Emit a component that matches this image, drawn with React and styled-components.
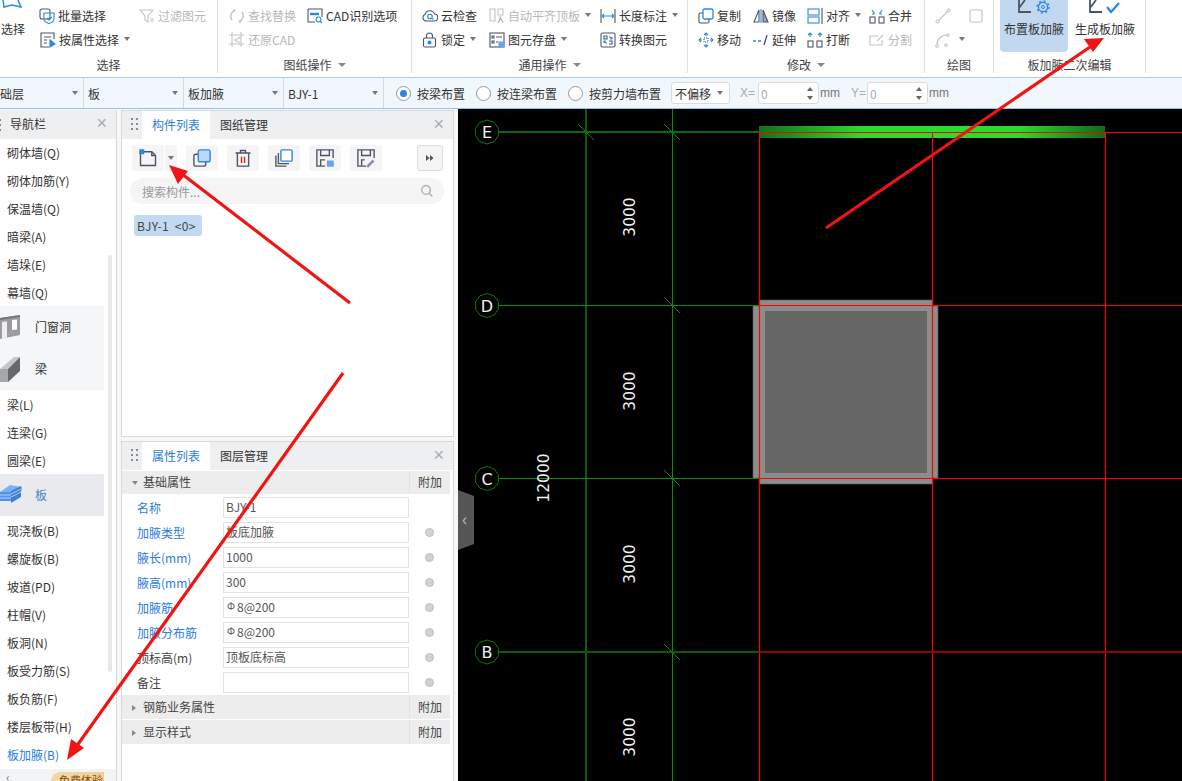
import React from 'react';
import styled, {createGlobalStyle} from 'styled-components';

const BLUE = '#2b86e6';
const INK = '#4c5566';
const OFF = '#c4c4c4';

const GlobalStyle = createGlobalStyle`
    html, body {
        margin: 0;
        padding: 0;
        background: #fff;
        overflow: hidden;
    }
    * {
        box-sizing: border-box;
    }
    body {
        font-family: "Noto Sans CJK SC", "Noto Sans", sans-serif;
        font-size: 12px;
        color: #333;
    }
`;

const Svg = ({children, size = 16, box = '0 0 16 16'}) => (
    <svg width={size} height={size} viewBox={box} fill="none" stroke={INK} strokeWidth="1.1">{children}</svg>
);

const icons = {
    batch: <Svg><rect x="1" y="1" width="10" height="10" rx="2" /><path d="M5 5h10v6q0 3-5 4.500q-5-1.500-5-4.500z" stroke={BLUE} /><path d="M8 10l2 2 3-3" stroke={BLUE} /></Svg>,
    attr: <Svg><path d="M14 7V1H1v14h8M4 5h7M4 8h3M4 11h3" /><path d="M10 8v7l5-3z" fill={BLUE} stroke={BLUE} /></Svg>,
    filter: <Svg><g stroke={OFF}><path d="M1 2h13l-5 6v6l-3-2V8z" /><path d="M11 11h4M11 13h4" /></g></Svg>,
    find: <Svg><g stroke={OFF} strokeWidth="1.4"><path d="M3 12A6 6 0 0 1 6 2.500" /><path d="M13 4a6 6 0 0 1-3 9.500" /><path d="M5 1v3M11 12v3" /></g></Svg>,
    restore: <Svg><g stroke={OFF}><path d="M3 0v15M0 3h15M12 0v15M0 12h15" /><path d="M11 5L6 8l5 3" /></g></Svg>,
    cad: <Svg><path d="M1 1h14v8M1 1v13h7" /><circle cx="11.500" cy="11.500" r="2.500" stroke={BLUE} /><path d="M13 13l2 2" stroke={BLUE} /><path d="M3 6h9" stroke={BLUE} strokeWidth="2.400" /></Svg>,
    cloud: <Svg><path d="M4 13h8a3.500 3.500 0 0 0 .5-7A5 5 0 0 0 3 6.500 3.400 3.400 0 0 0 4 13z" /><circle cx="8" cy="8.500" r="2.300" stroke={BLUE} /><path d="M10 10.500l1.500 1" stroke={BLUE} /></Svg>,
    lock: <Svg><rect x="1.500" y="6" width="12" height="9" rx="1.500" /><path d="M4.500 6V4a3 3 0 0 1 6 0v2" /><circle cx="7.500" cy="10.500" r="1.500" fill={BLUE} stroke={BLUE} /></Svg>,
    align: <Svg><g stroke={OFF}><path d="M1 1h5v12H1zM9 1h5v6H9zM11 8v2" /><path d="M9 15l2.500-5 2.500 5" stroke="#aaa" /></g></Svg>,
    store: <Svg><rect x="1" y="1" width="14" height="14" /><path d="M3 4h2v2H3zM7 5h6M3 9h2v2H3zM7 10h2" /><rect x="10" y="10" width="5" height="5" fill="#6da4e6" stroke="#6da4e6" /></Svg>,
    dim: <Svg><path d="M1 1v14M15 1v14" /><path d="M2 8h12M4 6L2 8l2 2M12 6l2 2-2 2" stroke={BLUE} /></Svg>,
    convert: <Svg><rect x="1" y="1" width="14" height="14" rx="1.500" /><path d="M4 4h3v3H4zM9 12h3V9H9" /><path d="M9 5a3 3 0 0 1 3 2M12 5v2h-2M7 11a3 3 0 0 1-3-2M4 11V9h2" stroke={BLUE} /></Svg>,
    copy: <Svg><rect x="1" y="5" width="10" height="10" rx="1.500" /><rect x="5" y="1" width="10" height="10" rx="1.500" fill="#fff" stroke={BLUE} strokeWidth="1.300" /></Svg>,
    mirror: <Svg><path d="M6 2L1 14h5z" /><path d="M10 2l5 12h-5z" fill="#9ea6b3" /><path d="M8 1v14" stroke={BLUE} /></Svg>,
    alignH: <Svg><rect x="1" y="1" width="11" height="6" stroke={BLUE} /><rect x="1" y="9" width="11" height="6" stroke={BLUE} /><path d="M15 0v16" /></Svg>,
    merge: <Svg><rect x="1" y="9" width="5" height="6" /><rect x="10" y="9" width="5" height="6" /><g stroke={BLUE}><path d="M3 2l2 3M3 6h2V4M13 2l-2 3M13 6h-2V4" /></g></Svg>,
    move: <Svg><g stroke={BLUE}><path d="M8 1v3M8 12v3M1 8h3M12 8h3" /><path d="M6 3l2-2 2 2M6 13l2 2 2-2M3 6L1 8l2 2M13 6l2 2-2 2" /></g><path d="M6 6h4v4H6z" strokeDasharray="1 1" /></Svg>,
    extend: <Svg><path d="M0 9h3M5 9h3" stroke={BLUE} strokeWidth="1.300" /><path d="M14 3l-3 10" strokeWidth="1.300" /></Svg>,
    split: <Svg><rect x="1" y="9" width="5" height="6" /><rect x="10" y="9" width="5" height="6" /><g stroke={BLUE}><path d="M3 1v4M1 3l2-2 2 2M13 1v4M11 3l2-2 2 2" /></g></Svg>,
    cut: <Svg><g stroke={OFF}><path d="M9 4H1v9h12V8" /><path d="M8 9l6-6" /></g></Svg>,
    line: <Svg><g stroke={OFF}><path d="M3 13L13 3" /><circle cx="2.500" cy="13.500" r="1.500" /><circle cx="13.500" cy="2.500" r="1.500" /></g></Svg>,
    rect: <Svg><rect x="2" y="2" width="12" height="12" rx="1.500" stroke={OFF} /></Svg>,
    arc: <Svg><g stroke={OFF}><path d="M2 13C2 7 6 3 12 3" /><circle cx="2" cy="14" r="1.300" /><circle cx="13" cy="3" r="1.300" /><circle cx="11" cy="13" r="1.300" /></g></Svg>,
};

const Tool = ({icon, label, off, caret, nudge}) => (
    <ToolRow off={off} nudge={nudge}>
        <IconSlot>{icons[icon]}</IconSlot>
        <span>{label}</span>
        {caret && <Caret />}
    </ToolRow>
);

const Group = ({title, width, pad, caret, children}) => (
    <GroupBox width={width}>
        <GroupBody pad={pad}>{children}</GroupBody>
        <GroupTitle>{title}{caret && <TitleCaret />}</GroupTitle>
    </GroupBox>
);

const LayerIcon = () => (
    <svg width="22" height="24" viewBox="0 0 22 24">
        <path d="M0 9L10 2l12 2v3L10 16 0 14z" fill="#7db2f0" />
        <path d="M0 9h11v9H0z" fill="#4f92e8" />
        <path d="M11 8l10-5v11l-10 6z" fill="#3f7fd8" />
        <path d="M0 12h11M0 15h11M11 11l10-5M11 14l10-5" stroke="#cfe2fa" strokeWidth=".8" />
    </svg>
);

const WallIcon = () => (
    <svg width="21" height="26" viewBox="0 0 21 26">
        <path d="M0 4l20-3v20L0 25z" fill="#9a9c9f" />
        <path d="M0 4l20-3v2L0 6z" fill="#75777a" />
        <path d="M12 6l5-.5v10l-5 .5z" fill="#fff" />
        <path d="M2 8l5-.8V25H2z" fill="#eee" />
    </svg>
);

const BeamIcon = () => (
    <svg width="21" height="26" viewBox="0 0 21 26">
        <path d="M0 13L14 1h6L8 13z" fill="#c4c6c9" />
        <path d="M8 13L20 1v14L8 26z" fill="#66686c" />
        <path d="M0 13h8v13H0z" fill="#a5a7aa" />
    </svg>
);

const Nav = () => {
    const first = ['砌体墙(Q)', '砌体加筋(Y)', '保温墙(Q)', '暗梁(A)', '墙垛(E)', '幕墙(Q)'];
    const second = ['梁(L)', '连梁(G)', '圆梁(E)'];
    const third = ['现浇板(B)', '螺旋板(B)', '坡道(PD)', '柱帽(V)', '板洞(N)', '板受力筋(S)', '板负筋(F)', '楼层板带(H)'];
    return (
        <NavPane>
            <NavHead>
                <NavGrip />
                导航栏
                <Close>×</Close>
            </NavHead>
            {first.map(t => <NavItem key={t}>{t}</NavItem>)}
            <NavBlock>
                <NavCat><CatIcon><WallIcon /></CatIcon><span>门窗洞</span></NavCat>
                <NavCat><CatIcon><BeamIcon /></CatIcon><span>梁</span></NavCat>
            </NavBlock>
            {second.map(t => <NavItem key={t}>{t}</NavItem>)}
            <NavBlock active>
                <NavCat active><CatIcon><LayerIcon /></CatIcon><span>板</span></NavCat>
            </NavBlock>
            {third.map(t => <NavItem key={t}>{t}</NavItem>)}
            <NavItem active>板加腋(B)</NavItem>
            <NavFoot>
                <span>‹</span>
                <Badge>免费体验</Badge>
            </NavFoot>
            <NavScroll />
        </NavPane>
    );
};

const PanelHeader = ({active, other}) => (
    <PanelHead>
        <Grip><i /><i /><i /><i /><i /><i /></Grip>
        <Tab active>{active}</Tab>
        <Tab>{other}</Tab>
        <Close>×</Close>
    </PanelHead>
);

const ListPanel = () => (
    <Panel height={327}>
        <PanelHeader active="构件列表" other="图纸管理" />
        <Toolbar>
            <SplitButton>
                <SplitMain>
                    <Svg size={20}><path d="M2 3h9l3 3v8H2z" /><rect x="1" y="1" width="4" height="4" fill={BLUE} stroke="none" /><path d="M11 3v3h3" /></Svg>
                </SplitMain>
                <SplitSide><Caret /></SplitSide>
            </SplitButton>
            <ToolButton>
                <Svg size={20}><rect x="1.500" y="5" width="9.500" height="9.500" rx="1.500" /><rect x="5" y="1.500" width="9.500" height="9.500" rx="1.500" fill="#bcd6f5" stroke={BLUE} /></Svg>
            </ToolButton>
            <ToolButton>
                <Svg size={20}><path d="M2 4h12M6 4V2h4v2M3.500 4v10.500h9V4" /><path d="M6.800 7v5M9.200 7v5" stroke="#d22" /></Svg>
            </ToolButton>
            <ToolButton>
                <Svg size={20}><path d="M1.500 6v8.500H10M3.500 4v8.500H12" /><rect x="5.500" y="1.500" width="9" height="9" rx="1" fill="#fff" stroke={BLUE} /></Svg>
            </ToolButton>
            <ToolButton>
                <Svg size={20}><path d="M8 14.500H1.500v-13h13V8M4.500 2v4h7V2M4.500 14V9.500H8" /><rect x="9.500" y="10" width="5.500" height="5" fill="#6da4e6" stroke="none" /></Svg>
            </ToolButton>
            <ToolButton>
                <Svg size={20}><path d="M8 14.500H1.500v-13h13V8M4.500 2v4h7V2M4.500 14V9.500H7" /><path d="M9 15l5-5" stroke="#8a93a3" strokeWidth="2" /></Svg>
            </ToolButton>
            <MoreButton>
                <svg width="8" height="6" viewBox="0 0 8 6" fill="#555"><path d="M0 0l3.500 3L0 6zM4 0l3.500 3L4 6z" /></svg>
            </MoreButton>
        </Toolbar>
        <SearchBox>
            搜索构件...
            <svg width="14" height="14" viewBox="0 0 14 14" fill="none" stroke="#a9a9a9" strokeWidth="1.300"><circle cx="6" cy="6" r="4.300" /><path d="M9.300 9.300l3 3" /></svg>
        </SearchBox>
        <Tag>BJY-1  &lt;0&gt;</Tag>
    </Panel>
);

const fields = [
    {label: '名称', value: 'BJY-1', blue: true, noDot: true},
    {label: '加腋类型', value: '板底加腋', blue: true},
    {label: '腋长(mm)', value: '1000', blue: true},
    {label: '腋高(mm)', value: '300', blue: true},
    {label: '加腋筋', value: '8@200', blue: true, rebar: true},
    {label: '加腋分布筋', value: '8@200', blue: true, rebar: true},
    {label: '顶标高(m)', value: '顶板底标高'},
    {label: '备注', value: ''},
];

const PropsPanel = () => (
    <Panel height={340} grow>
        <PanelHeader active="属性列表" other="图层管理" />
        <Section first><SectionName><SecArrow open />基础属性</SectionName><SectionExtra>附加</SectionExtra></Section>
        <Fields>
            {fields.map(f => (
                <FieldRow key={f.label}>
                    <FieldLabel blue={f.blue}>{f.label}</FieldLabel>
                    <FieldValue>{f.rebar && <Rebar>Φ</Rebar>}{f.value}</FieldValue>
                    {!f.noDot && <Dot />}
                </FieldRow>
            ))}
        </Fields>
        <Section><SectionName><SecArrow />钢筋业务属性</SectionName><SectionExtra>附加</SectionExtra></Section>
        <Section><SectionName><SecArrow />显示样式</SectionName><SectionExtra>附加</SectionExtra></Section>
    </Panel>
);

const ring = (cx, cy) => {
    const pts = [];
    for (let i = 0; i < 10; i++) {
        const a = (Math.PI * 2 * i) / 10 + Math.PI / 10;
        pts.push(`${(cx + 12 * Math.cos(a)).toFixed(1)},${(cy + 12 * Math.sin(a)).toFixed(1)}`);
    }
    return pts.join(' ');
};

const axes = [['E', 132], ['D', 305.5], ['C', 478.5], ['B', 652]];
const dims = [217, 391, 564, 737];

const Drawing = () => (
    <svg width="724" height="672" viewBox="458 109 724 672" style={{display: 'block'}}>
        <defs>
            <linearGradient id="beam" x1="0" x2="1" y1="0" y2="0">
                <stop offset="0" stopColor="#14701a" />
                <stop offset=".3" stopColor="#2cdc2c" />
                <stop offset=".75" stopColor="#2cdc2c" />
                <stop offset="1" stopColor="#126a18" />
            </linearGradient>
        </defs>
        <rect x="759" y="126" width="346" height="12" fill="url(#beam)" />

        <path d="M753 306h6v-6h174v6h5v172h-5v6H759v-6h-6z" fill="#8c8c8c" stroke="#5a5a5a" strokeWidth=".6" />
        <rect x="765" y="311" width="162" height="162" fill="#666" />

        <path d="M586 109v672" stroke="#0a5c0a" strokeWidth="2" />
        <path d="M672.500 109v672" stroke="#0d8a0d" />
        <path d="M499 132h260" stroke="#0a6a0a" strokeWidth="2" />
        <path d="M499 305.500h260M499 478.500h260" stroke="#0d8a0d" />
        <path d="M499 652h260" stroke="#0a5c0a" strokeWidth="2" />
        <path d="M578 124l16 16M664 124l16 16M664 297l16 16M664 470l16 16M664 644l16 16" stroke="#0d8a0d" />

        <path d="M759.500 132v649M932.500 132v649M1105.500 132v649" stroke="#f00" strokeWidth="1.200" />
        <path d="M759 132.500h423M759 305.500h423M759 478.500h423" stroke="#f00" strokeWidth="1.200" />
        <path d="M759 652h423" stroke="#900606" strokeWidth="2" />

        {axes.map(([name, y]) => (
            <g key={name}>
                <polygon points={ring(487, y)} fill="#000" stroke="#0a7a0a" />
                <CadText x="487" y={y + 6} textAnchor="middle" fontSize="16">{name}</CadText>
            </g>
        ))}
        {dims.map(y => (
            <CadText key={y} textAnchor="middle" fontSize="15.500" transform={`translate(635 ${y}) rotate(-90)`}>3000</CadText>
        ))}
        <CadText textAnchor="middle" fontSize="15.500" transform="translate(549 478) rotate(-90)">12000</CadText>
    </svg>
);

const Marks = () => (
    <Overlay width="1182" height="781" viewBox="0 0 1182 781">
        <g stroke="#f01414" strokeWidth="3.200" fill="#f01414">
            <path d="M826 228L1090 47" />
            <path d="M350 303L182 174" />
            <path d="M343 373L76 747" />
        </g>
        <g fill="#f01414">
            <path d="M1104 38l-20 1 9 13z" />
            <path d="M169 165l9 19 10-13z" />
            <path d="M67 760l17-12-13-9z" />
        </g>
    </Overlay>
);

export default function App() {
    return (
        <Page>
            <GlobalStyle />
            <Ribbon>
                <Group title="选择" width={218} pad={0}>
                    <BigSelect>
                        <svg width="22" height="8" viewBox="0 0 22 8" fill="none" stroke={BLUE} strokeWidth="1.500"><path d="M2 0l1 7 8-2 9 2-3-7" /></svg>
                        <span>选择</span>
                    </BigSelect>
                    <Col width={100}>
                        <Tool icon="batch" label="批量选择" />
                        <Tool icon="attr" label="按属性选择" caret nudge />
                    </Col>
                    <Col width={78}>
                        <Tool icon="filter" label="过滤图元" off />
                    </Col>
                </Group>
                <Group title="图纸操作" width={194} pad={11} caret>
                    <Col width={78}>
                        <Tool icon="find" label="查找替换" off />
                        <Tool icon="restore" label="还原CAD" off />
                    </Col>
                    <Col width={94}>
                        <Tool icon="cad" label="CAD识别选项" />
                    </Col>
                </Group>
                <Group title="通用操作" width={276} pad={10} caret>
                    <Col width={67}>
                        <Tool icon="cloud" label="云检查" />
                        <Tool icon="lock" label="锁定" caret />
                    </Col>
                    <Col width={111}>
                        <Tool icon="align" label="自动平齐顶板" off caret />
                        <Tool icon="store" label="图元存盘" caret />
                    </Col>
                    <Col width={80}>
                        <Tool icon="dim" label="长度标注" caret />
                        <Tool icon="convert" label="转换图元" />
                    </Col>
                </Group>
                <Group title="修改" width={237} pad={10} caret>
                    <Col width={55}>
                        <Tool icon="copy" label="复制" />
                        <Tool icon="move" label="移动" />
                    </Col>
                    <Col width={54}>
                        <Tool icon="mirror" label="镜像" />
                        <Tool icon="extend" label="延伸" />
                    </Col>
                    <Col width={62}>
                        <Tool icon="alignH" label="对齐" caret />
                        <Tool icon="split" label="打断" />
                    </Col>
                    <Col width={50}>
                        <Tool icon="merge" label="合并" />
                        <Tool icon="cut" label="分割" off />
                    </Col>
                </Group>
                <Group title="绘图" width={69} pad={10}>
                    <Col width={33}>
                        <Tool icon="line" label="" />
                        <Tool icon="arc" label="" caret />
                    </Col>
                    <Col width={16}>
                        <Tool icon="rect" label="" />
                    </Col>
                </Group>
                <Group title="板加腋二次编辑" width={152} pad={6}>
                    <BigButton active>
                        <BigIcon>
                            <svg width="34" height="14" viewBox="0 0 34 14" fill="none" stroke={INK} strokeWidth="1.800"><path d="M2 0v12h12M2 8l6-8" /><circle cx="26" cy="7" r="4.600" stroke={BLUE} strokeWidth="1.300" /><circle cx="26" cy="7" r="6" stroke={BLUE} strokeWidth="1.400" strokeDasharray="2 2.700" /><circle cx="26" cy="7" r="1.500" stroke={BLUE} strokeWidth="1" /></svg>
                        </BigIcon>
                        布置板加腋
                    </BigButton>
                    <BigButton>
                        <BigIcon>
                            <svg width="34" height="14" viewBox="0 0 34 14" fill="none" stroke={INK} strokeWidth="1.800"><path d="M2 0v12h12M2 8l6-8" /><path d="M19 7l4 5 8-9" stroke={BLUE} strokeWidth="2.200" /></svg>
                        </BigIcon>
                        生成板加腋
                    </BigButton>
                </Group>
            </Ribbon>
            <OptionBar>
                <SelectCell width={84} flush>础层<Caret /></SelectCell>
                <SelectCell width={100}>板<Caret /></SelectCell>
                <SelectCell width={100}>板加腋<Caret /></SelectCell>
                <SelectCell width={100}>BJY-1<Caret /></SelectCell>
                <Options>
                    <Radio checked />
                    <OptionText>按梁布置</OptionText>
                    <Radio />
                    <OptionText>按连梁布置</OptionText>
                    <Radio />
                    <OptionText>按剪力墙布置</OptionText>
                    <OffsetSelect>不偏移<Caret /></OffsetSelect>
                    <Coord>X=</Coord>
                    <CoordInput>0<Spin><i /><b /></Spin></CoordInput>
                    <Unit>mm</Unit>
                    <Coord second>Y=</Coord>
                    <CoordInput>0<Spin><i /><b /></Spin></CoordInput>
                    <Unit>mm</Unit>
                </Options>
            </OptionBar>
            <Body>
                <Nav />
                <Middle>
                    <ListPanel />
                    <PropsPanel />
                </Middle>
                <Canvas>
                    <Drawing />
                    <CollapseTab>‹</CollapseTab>
                </Canvas>
            </Body>
            <Marks />
        </Page>
    );
}

const Page = styled.div`
    position: relative;
    width: 1182px;
    height: 781px;
    overflow: hidden;
`;

const Ribbon = styled.div`
    display: flex;
    height: 77px;
    background: #fff;
`;

const GroupBox = styled.div`
    width: ${props => props.width}px;
    height: 73px;
    display: flex;
    flex-direction: column;
    border-right: 1px solid #e0e0e0;
    flex: none;
`;

const GroupBody = styled.div`
    display: flex;
    height: 57px;
    padding-left: ${props => props.pad}px;
    padding-top: 3px;
`;

const GroupTitle = styled.div`
    display: flex;
    justify-content: center;
    align-items: center;
    gap: 6px;
    height: 16px;
    line-height: 16px;
    color: #444;
`;

const TitleCaret = styled.i`
    border: 4px solid transparent;
    border-top: 4px solid #888;
    border-bottom: 0;
`;

const Col = styled.div`
    width: ${props => props.width}px;
    flex: none;
`;

const ToolRow = styled.div`
    display: flex;
    align-items: center;
    height: 24px;
    white-space: nowrap;
    padding-left: ${props => (props.nudge ? 1 : 0)}px;
    color: ${props => (props.off ? '#b8b8b8' : '#333')};
`;

const IconSlot = styled.span`
    display: flex;
    width: 16px;
    height: 16px;
    margin: 1px 3px 0 0;
    flex: none;
`;

const Caret = styled.i`
    display: inline-block;
    margin-left: auto;
    border: 3px solid transparent;
    border-top: 4px solid #777;
    border-bottom: 0;
    ${ToolRow} & {
        margin-left: 5px;
    }
`;

const BigSelect = styled.div`
    width: 39px;
    flex: none;
    margin-top: -3px;
    padding-left: 1px;
    display: flex;
    flex-direction: column;
    gap: 13px;
    line-height: 16px;
    svg {
        display: block;
    }
`;

const BigButton = styled.div`
    width: ${props => (props.active ? 68 : 62)}px;
    height: 52px;
    margin: -3px 6px 0 0;
    flex: none;
    display: flex;
    flex-direction: column;
    align-items: center;
    color: #333;
    line-height: 16px;
    white-space: nowrap;
    border-radius: 0 0 4px 4px;
    background: ${props => (props.active ? '#c2d8f0' : 'transparent')};
`;

const BigIcon = styled.div`
    height: 14px;
    margin-bottom: 7px;
    svg {
        display: block;
    }
`;

const OptionBar = styled.div`
    display: flex;
    height: 32px;
    background: #f0f8fd;
    border-top: 1px solid #a9cdf0;
    border-bottom: 1px solid #90c2f2;
`;

const SelectCell = styled.div`
    width: ${props => props.width}px;
    flex: none;
    display: flex;
    align-items: center;
    padding: 0 4px 0 ${props => (props.flush ? 0 : 4)}px;
    border-right: 1px solid #cfdce8;
    ${Caret} {
        margin-right: 1px;
    }
`;

const Options = styled.div`
    display: flex;
    align-items: center;
    padding-left: 12px;
`;

const Radio = styled.span`
    position: relative;
    width: 15px;
    height: 15px;
    border-radius: 50%;
    border: 1px solid #999;
    background: #fff;
    flex: none;
    &::after {
        content: '';
        display: ${props => (props.checked ? 'block' : 'none')};
        position: absolute;
        left: 3px;
        top: 3px;
        width: 7px;
        height: 7px;
        border-radius: 50%;
        background: ${BLUE};
    }
`;

const OptionText = styled.span`
    margin: 0 11px 0 6px;
    white-space: nowrap;
`;

const OffsetSelect = styled.div`
    width: 59px;
    height: 22px;
    margin-left: -1px;
    display: flex;
    align-items: center;
    padding: 0 6px 0 3px;
    background: #fff;
    border: 1px solid #dcdcdc;
    border-radius: 3px;
    flex: none;
`;

const Coord = styled.span`
    color: #aaa;
    margin-left: 10px;
    width: ${props => (props.second ? 16 : 18)}px;
    flex: none;
    font-family: "Liberation Sans", sans-serif;
`;

const CoordInput = styled.div`
    width: 61px;
    height: 22px;
    display: flex;
    align-items: center;
    justify-content: space-between;
    padding: 0 5px 0 2px;
    color: #aaa;
    background: #fff;
    border: 1px solid #dcdcdc;
    border-radius: 3px;
    flex: none;
`;

const Spin = styled.span`
    display: flex;
    flex-direction: column;
    gap: 5px;
    i {
        border: 3px solid transparent;
        border-bottom: 4px solid #666;
        border-top: 0;
    }
    b {
        border: 3px solid transparent;
        border-top: 4px solid #666;
        border-bottom: 0;
    }
`;

const Unit = styled.span`
    margin-left: 1px;
    width: 21px;
    color: #777;
    flex: none;
    font-family: "Liberation Sans", sans-serif;
`;

const Body = styled.div`
    display: flex;
    height: 672px;
    background: #f7f7f7;
`;

const NavPane = styled.div`
    position: relative;
    width: 117px;
    margin-top: 1px;
    background: #fff;
    border-right: 1px solid #d9d9d9;
    overflow: hidden;
    flex: none;
`;

const NavHead = styled.div`
    position: relative;
    height: 29px;
    padding-left: 10px;
    line-height: 27px;
    background: #eeeff1;
`;

const NavGrip = styled.i`
    position: absolute;
    left: -1px;
    top: 9px;
    width: 2px;
    height: 12px;
    background: repeating-linear-gradient(#888 0 2px, transparent 2px 5px);
`;

const Close = styled.span`
    position: absolute;
    right: 9px;
    top: 0;
    font-size: 18px;
    line-height: 27px;
    color: #aaa;
    font-family: "Liberation Sans", sans-serif;
    font-weight: normal;
`;

const NavItem = styled.div`
    height: 28px;
    line-height: 27px;
    padding-left: 7px;
    color: ${props => (props.active ? '#2b7ce0' : '#333')};
    white-space: nowrap;
`;

const NavBlock = styled.div`
    width: 104px;
    margin: -1px 0 1px;
    background: ${props => (props.active ? '#e9eaee' : '#f5f6f8')};
`;

const NavCat = styled.div`
    display: flex;
    align-items: center;
    height: 42px;
    color: ${props => (props.active ? '#4a7fd4' : '#333')};
    span:last-child {
        margin-top: -2px;
    }
`;

const CatIcon = styled.span`
    display: flex;
    width: 35px;
    flex: none;
    margin: 0;
`;

const NavFoot = styled.div`
    display: flex;
    justify-content: space-between;
    height: 12px;
    padding: 2px 12px 0 6px;
    background: #f2f3f5;
    color: #777;
    line-height: 12px;
`;

const Badge = styled.span`
    width: 53px;
    height: 20px;
    margin-top: 1px;
    padding-left: 8px;
    font-size: 11px;
    line-height: 16px;
    color: #7a4d14;
    background: linear-gradient(90deg, #f3d9a6, #efcf92);
    border-radius: 9px 0 0 0;
`;

const NavScroll = styled.i`
    position: absolute;
    left: 108px;
    top: 145px;
    width: 4px;
    height: 417px;
    border-radius: 2px;
    background: #e8e8e8;
`;

const Middle = styled.div`
    width: 337px;
    margin-left: 4px;
    padding-top: 1px;
    display: flex;
    flex-direction: column;
    gap: 4px;
    flex: none;
`;

const Panel = styled.div`
    width: 333px;
    height: ${props => props.height}px;
    background: #fff;
    border: 1px solid #d9d9d9;
    ${props => props.grow && 'border-bottom: 0;'}
    flex: none;
`;

const PanelHead = styled.div`
    position: relative;
    display: flex;
    height: 28px;
    background: #eeeff1;
`;

const Grip = styled.span`
    display: grid;
    grid-template-columns: 2px 2px;
    grid-template-rows: repeat(3, 2px);
    gap: 3px;
    padding: 7px 0 0 9px;
    width: 20px;
    flex: none;
    i {
        background: #8c8c8c;
    }
`;

const Tab = styled.div`
    width: 68px;
    text-align: center;
    line-height: 27px;
    background: ${props => (props.active ? '#fff' : 'transparent')};
    color: ${props => (props.active ? '#2b7ce0' : '#333')};
`;

const Toolbar = styled.div`
    display: flex;
    gap: 9px;
    height: 26px;
    margin: 6px 10px 0;
`;

const ToolButton = styled.div`
    width: 32px;
    height: 26px;
    display: flex;
    align-items: center;
    justify-content: center;
    border-radius: 3px;
    background: #f5f5f6;
    flex: none;
`;

const SplitButton = styled.div`
    display: flex;
    width: 45px;
    height: 26px;
    background: #f5f5f6;
    border-radius: 3px;
    flex: none;
`;

const SplitMain = styled.div`
    width: 33px;
    display: flex;
    align-items: center;
    justify-content: center;
    border-right: 1px solid #fff;
`;

const SplitSide = styled.div`
    flex: 1;
    display: flex;
    align-items: center;
    justify-content: center;
    ${Caret} {
        margin: 0;
    }
`;

const MoreButton = styled(ToolButton)`
    width: 26px;
    margin-left: auto;
    border: 1px solid #dedede;
`;

const SearchBox = styled.div`
    display: flex;
    align-items: center;
    justify-content: space-between;
    height: 26px;
    margin: 7px 9px 0 8px;
    padding: 0 10px 0 12px;
    border-radius: 13px;
    background: #f5f5f5;
    color: #999;
`;

const Tag = styled.div`
    width: 68px;
    height: 21px;
    margin: 11px 0 0 12px;
    padding-left: 3px;
    line-height: 21px;
    white-space: pre;
    letter-spacing: .3px;
    color: #444;
    background: #c2d9f2;
    border-radius: 3px;
`;

const Section = styled.div`
    display: flex;
    width: 328px;
    height: ${props => (props.first ? 23 : 24)}px;
    margin-top: 1px;
    line-height: ${props => (props.first ? 21 : 23)}px;
    background: #ededed;
    color: #444;
`;

const SectionName = styled.div`
    position: relative;
    width: 288px;
    padding-left: 21px;
    border-right: 1px solid #e2e2e2;
    flex: none;
`;

const SecArrow = styled.i`
    position: absolute;
    left: 10px;
    top: 10px;
    ${props => (props.open
        ? 'border: 3px solid transparent; border-top: 4px solid #888; border-bottom: 0;'
        : 'border: 3px solid transparent; border-left: 4px solid #888; border-right: 0;')}
`;

const SectionExtra = styled.div`
    flex: 1;
    text-align: center;
`;

const Fields = styled.div`
    padding-top: 1px;
    margin-bottom: -1px;
`;

const FieldRow = styled.div`
    display: flex;
    align-items: center;
    height: 25px;
`;

const FieldLabel = styled.div`
    width: 101px;
    padding-left: 15px;
    white-space: nowrap;
    color: ${props => (props.blue ? '#2b7ce0' : '#444')};
    flex: none;
`;

const FieldValue = styled.div`
    width: 186px;
    height: 21px;
    padding-left: 2px;
    line-height: 18px;
    border: 1px solid #e2e2e2;
    color: #555;
    flex: none;
`;

const Rebar = styled.span`
    position: relative;
    top: -2px;
    margin: 0 2px 0 1px;
    font-size: 10px;
`;

const Dot = styled.i`
    width: 9px;
    height: 9px;
    margin-left: 16px;
    border-radius: 50%;
    background: #d2d2d2;
    border: 1px solid #bfbfbf;
`;

const Canvas = styled.div`
    position: relative;
    width: 724px;
    background: #000;
    flex: none;
`;

const CadText = styled.text`
    fill: #f0f0f0;
    font-family: "DejaVu Sans", sans-serif;
`;

const CollapseTab = styled.div`
    position: absolute;
    left: 0;
    top: 381px;
    width: 16px;
    height: 60px;
    padding-left: 4px;
    line-height: 56px;
    font-size: 18px;
    color: #bbb;
    background: #565656;
    clip-path: polygon(0 0, 100% 6px, 100% 54px, 0 100%);
`;

const Overlay = styled.svg`
    position: absolute;
    left: 0;
    top: 0;
    pointer-events: none;
`;
